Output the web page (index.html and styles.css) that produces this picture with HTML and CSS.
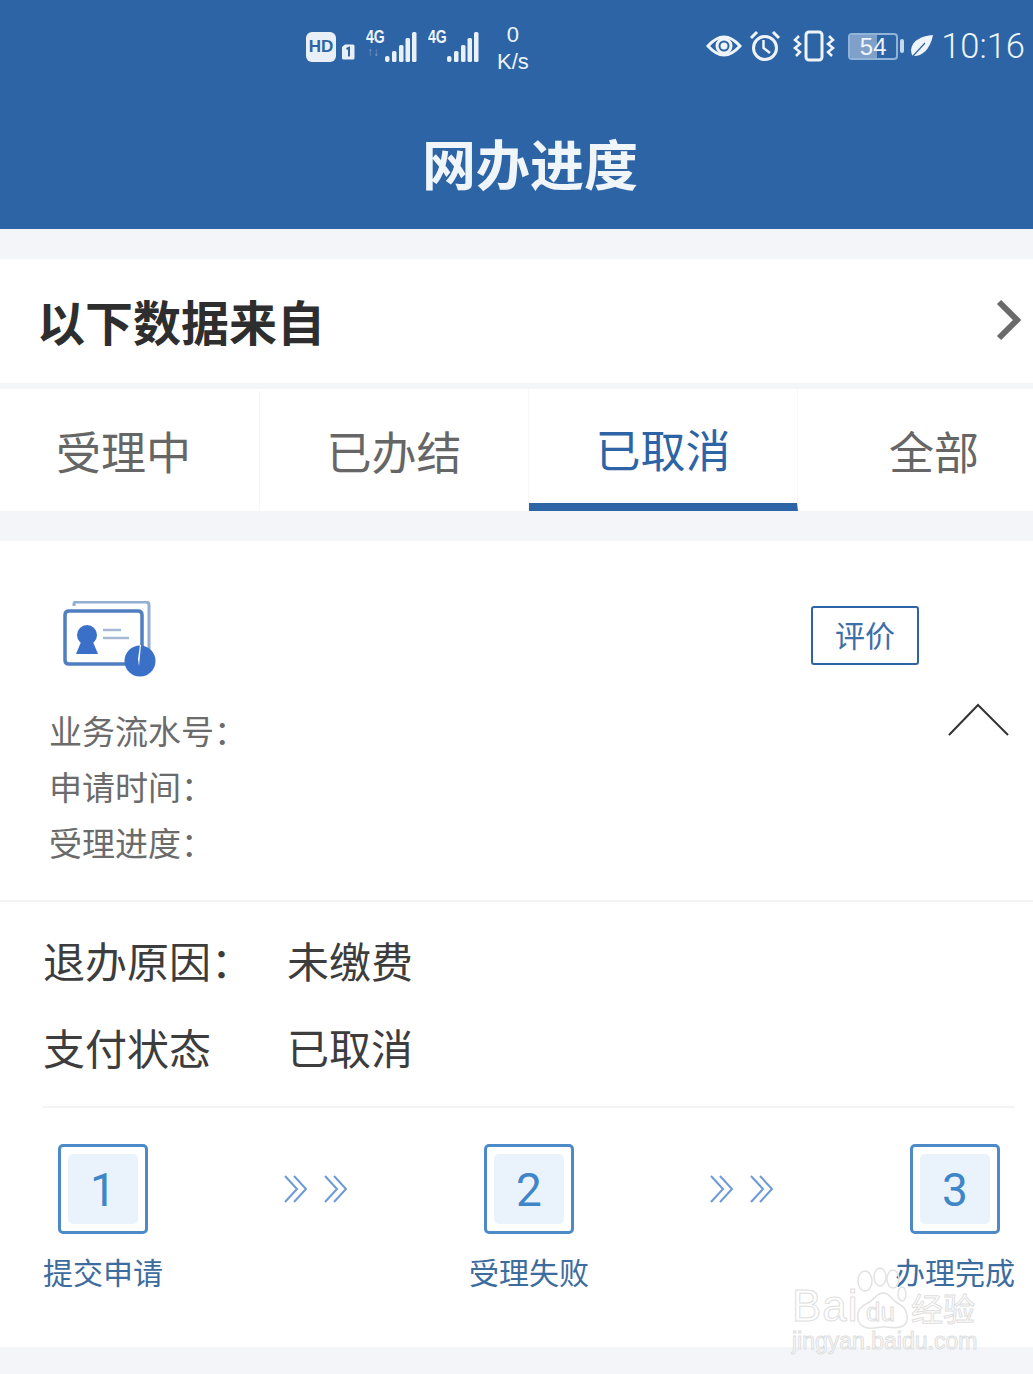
FILE: index.html
```html
<!DOCTYPE html>
<html lang="zh">
<head>
  <meta charset="UTF-8">
  <title>网办进度</title>
  <link rel="stylesheet" href="styles.css">
</head>
<body>

  <header class="top">
    <div class="status">
      <div class="status-left">
        <span class="hd">HD</span>
        <svg class="sim" width="14" height="16" viewBox="0 0 14 16"><path d="M1 3 L4 0.5 H12 Q13.500 0.500 13.500 2 V14 Q13.500 15.500 12 15.500 H2.500 Q1 15.500 1 14 Z" fill="#e8eff7"/><path d="M5.500 5 L8 3.800 V12.500" fill="none" stroke="#2d64a6" stroke-width="2"/></svg>
        <span class="signal">
          <span class="net">4G</span>
          <span class="arrows">↑↓</span>
          <svg width="32" height="32" viewBox="0 0 32 32"><g fill="#e8f0f8"><rect x="0" y="26" width="4.500" height="6" rx="2"/><rect x="7" y="21" width="4.500" height="11" rx="1.500"/><rect x="14" y="15" width="4.500" height="17" rx="1.500"/><rect x="20.500" y="8" width="4.500" height="24" rx="1.500"/><rect x="27" y="2" width="4.500" height="30" rx="1.500"/></g></svg>
        </span>
        <span class="signal">
          <span class="net">4G</span>
          <svg width="32" height="32" viewBox="0 0 32 32"><g fill="#e8f0f8"><rect x="0" y="26" width="4.500" height="6" rx="2"/><rect x="7" y="21" width="4.500" height="11" rx="1.500"/><rect x="14" y="15" width="4.500" height="17" rx="1.500"/><rect x="20.500" y="8" width="4.500" height="24" rx="1.500"/><rect x="27" y="2" width="4.500" height="30" rx="1.500"/></g></svg>
        </span>
        <span class="speed">0<br>K/s</span>
      </div>
      <div class="status-right">
        <svg width="36" height="26" viewBox="0 0 36 26"><path d="M2 13 Q18 -5 34 13 Q18 31 2 13 Z" fill="none" stroke="#eef4fa" stroke-width="3"/><circle cx="18" cy="13" r="7" fill="none" stroke="#eef4fa" stroke-width="3"/><circle cx="18" cy="13" r="3.500" fill="#eef4fa"/></svg>
        <svg class="alarm" width="32" height="32" viewBox="0 0 32 32"><circle cx="16" cy="18" r="11.500" fill="none" stroke="#eef4fa" stroke-width="3"/><path d="M14.500 10 V18 L21 23" fill="none" stroke="#eef4fa" stroke-width="2.500"/><path d="M2 8 L8 2 M24 2 L30 8" stroke="#eef4fa" stroke-width="3"/></svg>
        <svg class="vibrate" width="42" height="32" viewBox="0 0 42 32"><rect x="13" y="2" width="16" height="28" rx="3" fill="none" stroke="#eef4fa" stroke-width="3"/><path d="M6 6 L2 10 L7 14 L2 18 L7 22 L3 26 M36 6 L40 10 L35 14 L40 18 L35 22 L39 26" fill="none" stroke="#eef4fa" stroke-width="2.500"/></svg>
        <span class="battery">
          <span class="battery-body"><span class="battery-fill"></span><span class="battery-num">54</span></span>
          <span class="battery-cap"></span>
        </span>
        <svg class="leaf" width="24" height="24" viewBox="0 0 24 24"><path d="M23 1 C12 2 2 6 1 16 Q1 20 3 22 C10 23 20 17 23 1 Z" fill="#eef4fa"/><path d="M3 22 L15 9" stroke="#2d64a6" stroke-width="1.200"/></svg>
        <span class="clock">10:16</span>
      </div>
    </div>
    <h1 class="title">网办进度</h1>
  </header>

  <div class="source-row">
    <span class="source-text">以下数据来自</span>
    <svg width="26" height="44" viewBox="0 0 26 44"><path d="M4 4 L22 22 L4 40" fill="none" stroke="#6a6a6a" stroke-width="6"/></svg>
  </div>

  <nav class="tabs">
    <a class="tab">受理中</a>
    <a class="tab">已办结</a>
    <a class="tab active">已取消</a>
    <a class="tab">全部</a>
  </nav>

  <section class="card">
    <div class="card-top">
      <div class="card-head">
        <svg width="96" height="78" viewBox="0 0 96 78">
          <path d="M13 5 V3 Q13 1 15 1 H85 Q88 1 88 4 V50" fill="none" stroke="#94aed4" stroke-width="3"/>
          <path d="M68 63 H8 Q4 63 4 59 V14 Q4 10 8 10 H77 Q81 10 81 14 V48" fill="none" stroke="#4f7fc0" stroke-width="3.500"/>
          <circle cx="26" cy="34" r="10" fill="#3a70c8"/>
          <path d="M15 53 L20 41 H32 L37 53 Z" fill="#3a70c8"/>
          <path d="M42 29 H60 M42 37 H68" stroke="#a7b8d4" stroke-width="2.500"/>
          <circle cx="79" cy="60" r="15.500" fill="#3a70c8"/>
          <path d="M79 44 L77 58 L78 65 L80 44 Z" fill="#fff"/>
        </svg>
        <a class="rate-btn">评价</a>
      </div>
      <svg class="collapse" width="62" height="34" viewBox="0 0 62 34"><path d="M1 32 L30 2 L60 32" fill="none" stroke="#333" stroke-width="2"/></svg>
      <ul class="meta">
        <li>业务流水号：</li>
        <li>申请时间：</li>
        <li>受理进度：</li>
      </ul>
    </div>

    <div class="detail">
      <div class="detail-row"><span class="detail-key">退办原因：</span><span>未缴费</span></div>
      <div class="detail-row"><span class="detail-key">支付状态</span><span>已取消</span></div>
    </div>

    <div class="steps">
      <div class="step">
        <div class="step-box"><span class="step-num">1</span></div>
        <span class="step-label">提交申请</span>
      </div>
      <svg class="step-arrows" width="66" height="30" viewBox="0 0 66 30"><path d="M2 2 L14 15 L2 28 M11 2 L23 15 L11 28 M42 2 L54 15 L42 28 M51 2 L63 15 L51 28" fill="none" stroke="#6d9ad6" stroke-width="2"/></svg>
      <div class="step">
        <div class="step-box"><span class="step-num">2</span></div>
        <span class="step-label">受理失败</span>
      </div>
      <svg class="step-arrows" width="66" height="30" viewBox="0 0 66 30"><path d="M2 2 L14 15 L2 28 M11 2 L23 15 L11 28 M42 2 L54 15 L42 28 M51 2 L63 15 L51 28" fill="none" stroke="#6d9ad6" stroke-width="2"/></svg>
      <div class="step">
        <div class="step-box"><span class="step-num">3</span></div>
        <span class="step-label">办理完成</span>
      </div>
    </div>
  </section>

  <!-- 水印 -->
  <div class="watermark">
    <svg class="wm-paw" width="60" height="66" viewBox="0 0 60 66">
      <g fill="none" stroke="#e2e2e2" stroke-width="1.500">
        <ellipse cx="13" cy="15" rx="7" ry="10"/>
        <ellipse cx="28" cy="11" rx="6" ry="9"/>
        <ellipse cx="41" cy="13" rx="6" ry="9"/>
        <ellipse cx="50" cy="28" rx="4" ry="7"/>
        <path d="M31 27 C22 28 22 36 14 38 C3 42 2 60 16 62 C24 63 28 60 34 61 C40 62 46 63 51 60 C59 55 55 42 47 38 C40 35 39 27 31 27 Z"/>
      </g>
    </svg>
    <div class="wm-line"><span class="wm-bai">Bai</span><span class="wm-du">du</span><span class="wm-jy">经验</span></div>
    <div class="wm-url">jingyan.baidu.com</div>
  </div>

</body>
</html>
```

FILE: styles.css
```css
* {
  margin: 0;
  padding: 0;
  box-sizing: border-box;
}

html, body {
  height: 100%;
  overflow: hidden;
}

body {
  position: relative;
  background: #f3f5f9;
  font-family: "Liberation Sans", "Noto Sans CJK SC", sans-serif;
  color: #333;
}

.top {
  height: 229px;
  background: #2d64a6;
  color: #eef4fa;
}

.status {
  height: 92px;
  display: flex;
  justify-content: space-between;
  padding: 21px 8px 0 306px;
}

.status-left {
  display: flex;
  align-items: flex-start;
}

.hd {
  width: 30px;
  height: 30px;
  margin-top: 11px;
  border-radius: 6px;
  background: #e8eff7;
  color: #2d64a6;
  font-size: 17px;
  font-weight: bold;
  line-height: 30px;
  text-align: center;
}

.sim {
  margin: 23px 0 0 5px;
}

.signal {
  position: relative;
  width: 51px;
  height: 40px;
  margin: 9px 0 0 11px;
  display: flex;
  justify-content: flex-end;
}

.net {
  position: absolute;
  left: 0;
  top: -3px;
  font-size: 18px;
  font-weight: bold;
  transform: scaleX(0.78);
  transform-origin: left;
}

.arrows {
  position: absolute;
  left: 1px;
  top: 15px;
  font-size: 12px;
  color: #7ba0cb;
}

.speed {
  margin-left: 18px;
  font-size: 22px;
  line-height: 27px;
  text-align: center;
}

.status-right {
  display: flex;
  align-items: center;
  gap: 12px;
  height: 50px;
}

.alarm {
  margin-left: -5px;
}

.battery {
  display: flex;
  align-items: center;
  gap: 2px;
  margin-left: 1px;
}

.battery-body {
  position: relative;
  width: 50px;
  height: 27px;
  border: 2px solid #93b4d9;
  border-radius: 4px;
  overflow: hidden;
}

.battery-fill {
  position: absolute;
  left: 0;
  top: 0;
  bottom: 0;
  width: 27px;
  background: #7ea0c9;
}

.battery-num {
  position: relative;
  display: block;
  font-size: 24px;
  line-height: 23px;
  text-align: center;
}

.battery-cap {
  width: 4px;
  height: 14px;
  border-radius: 2px;
  background: #c6d8ec;
}

.leaf {
  margin-left: -6px;
}

.clock {
  margin-left: -5px;
  font-size: 34.500px;
  font-family: "Roboto", sans-serif;
  font-weight: 300;
}

.title {
  font-size: 54px;
  font-weight: bold;
  line-height: 60px;
  text-align: center;
  margin-left: 27px;
  margin-top: 45px;
  color: #f0f5fa;
}

.source-row {
  height: 124px;
  margin-top: 30px;
  padding: 0 12px 3px 37px;
  display: flex;
  align-items: center;
  justify-content: space-between;
  background: #fff;
}

.source-text {
  font-size: 48px;
  font-weight: bold;
  color: #2e2e2e;
}

.tabs {
  height: 122px;
  margin-top: 6px;
  display: flex;
  background: #fff;
}

.tab {
  width: 269px;
  display: flex;
  align-items: center;
  justify-content: center;
  border-right: 1px solid #f7f7f7;
  font-size: 45px;
  color: #666;
}

.tab:first-child {
  width: 260px;
  padding-right: 12px;
}

.tab:last-child {
  width: 235px;
  border-right: 0;
  padding-left: 37px;
}

.tab.active {
  color: #2d64a6;
  border-bottom: 8px solid #2d64a6;
  padding-top: 4px;
}

.card {
  height: 806px;
  margin-top: 30px;
  background: #fff;
}

.card-top {
  position: relative;
  height: 361px;
  padding: 60px 0 0 61px;
  border-bottom: 2px solid #f3f4f6;
}

.card-head {
  height: 92px;
  display: flex;
  justify-content: space-between;
  align-items: flex-start;
  padding-right: 114px;
}

.rate-btn {
  width: 108px;
  height: 59px;
  margin-top: 5px;
  border: 2px solid #2d64a6;
  border-radius: 3px;
  font-size: 30px;
  line-height: 58px;
  text-align: center;
  color: #3d6ea8;
}

.collapse {
  position: absolute;
  right: 23px;
  top: 162px;
}

.meta {
  list-style: none;
  margin: 12px 0 0 -12px;
  font-size: 33px;
  line-height: 56px;
  color: #6b6b6b;
}

.detail {
  padding: 18px 0 0 43px;
  font-size: 42px;
  line-height: 87px;
  color: #3d3d3d;
}

.detail-row {
  display: flex;
}

.detail-key {
  width: 244px;
}

.steps {
  height: 240px;
  margin: 12px 18px 0 43px;
  padding-top: 36px;
  display: flex;
  justify-content: space-between;
  align-items: flex-start;
  border-top: 2px solid #f3f4f6;
}

.step {
  width: 120px;
  display: flex;
  flex-direction: column;
  align-items: center;
}

.step-box {
  width: 90px;
  height: 90px;
  padding: 7px;
  border: 3px solid #4d8ac8;
  border-radius: 5px;
}

.step-num {
  display: block;
  height: 70px;
  border-radius: 5px;
  background: #eaf3fc;
  color: #3f86c8;
  font-family: "Roboto", sans-serif;
  font-size: 46px;
  line-height: 72px;
  text-align: center;
}

.step-label {
  margin-top: 18px;
  font-size: 30px;
  line-height: 44px;
  white-space: nowrap;
  color: #3d6c9e;
}

.step-arrows {
  margin-top: 30px;
}

.watermark {
  position: absolute;
  left: 792px;
  top: 1284px;
  color: #fff;
  -webkit-text-stroke: 1px #dedede;
  pointer-events: none;
}

.wm-paw {
  position: absolute;
  left: 60px;
  top: -18px;
}

.wm-line {
  display: flex;
  align-items: baseline;
  line-height: 44px;
}

.wm-bai {
  width: 74px;
  font-size: 44px;
  letter-spacing: 1px;
}

.wm-du {
  width: 45px;
  font-size: 26px;
}

.wm-jy {
  font-size: 32px;
}

.wm-url {
  margin-top: -6px;
  font-size: 23px;
  line-height: 26px;
}
```
